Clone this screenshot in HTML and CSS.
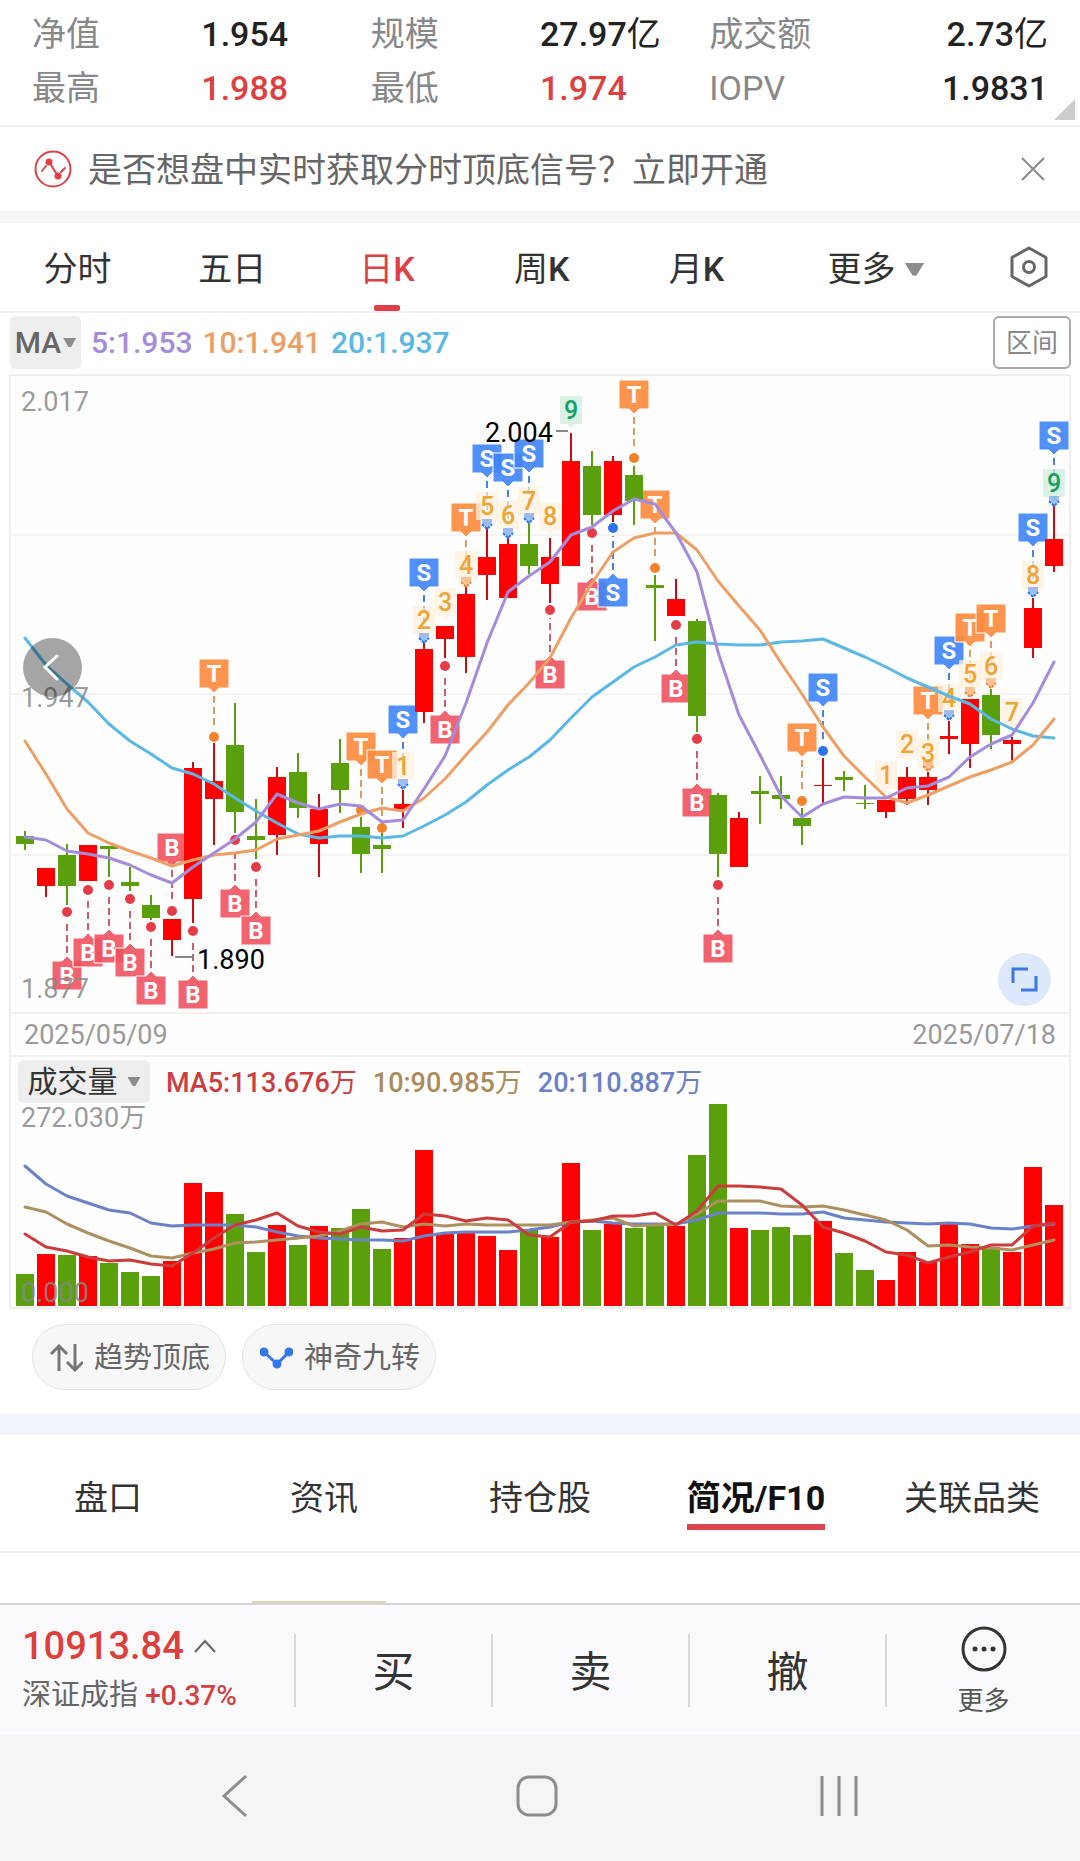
FILE: index.html
```html
<!DOCTYPE html>
<html lang="zh-CN">
<head>
<meta charset="utf-8">
<meta name="viewport" content="width=device-width, initial-scale=1">
<title>日K 行情</title>
<link rel="stylesheet" href="styles.css">
</head>
<body>
<main>
  <section class="quote">
    <dl class="quote-grid">
      <dt>净值</dt><dd>1.954</dd>
      <dt>规模</dt><dd>27.97<span class="unit">亿</span></dd>
      <dt>成交额</dt><dd class="end">2.73<span class="unit">亿</span></dd>
      <dt>最高</dt><dd class="up">1.988</dd>
      <dt>最低</dt><dd class="up">1.974</dd>
      <dt>IOPV</dt><dd class="end">1.9831</dd>
    </dl>
    <span class="corner"></span>
  </section>

  <section class="notice">
    <svg class="notice-icon" viewBox="0 0 38 38" fill="none" stroke="#d9434c" stroke-width="2">
      <circle cx="19" cy="19" r="17.500"/>
      <path d="M8 21l4-5M17 15l5 8M27 22l4-4" stroke-linecap="round"/>
      <circle cx="15" cy="12" r="3.500" fill="#e63c48" stroke="none"/><circle cx="24" cy="26" r="3.500" fill="#e63c48" stroke="none"/>
    </svg>
    <a href="#open" class="notice-text">是否想盘中实时获取分时顶底信号？立即开通</a>
    <button aria-label="关闭">
      <svg class="close-icon" viewBox="0 0 24 24" stroke="#8a8a8a" stroke-width="2"><path d="M1 1l22 22M23 1L1 23"/></svg>
    </button>
  </section>

  <nav class="periods">
    <button class="period">分时</button>
    <button class="period">五日</button>
    <button class="period active">日<b>K</b></button>
    <button class="period">周<b>K</b></button>
    <button class="period">月<b>K</b></button>
    <button class="period">更多<span class="caret"></span></button>
    <button aria-label="设置">
      <svg class="settings-icon" viewBox="0 0 40 42" fill="none" stroke="#666" stroke-width="3" stroke-linejoin="round">
        <path d="M20 2l17 9.500v19L20 40 3 30.500v-19z"/><circle cx="20" cy="21" r="5.500"/>
      </svg>
    </button>
  </nav>

  <section class="averages">
    <button class="chip">MA<span class="caret small"></span></button>
    <span class="ma5">5:1.953</span>
    <span class="ma10">10:1.941</span>
    <span class="ma20">20:1.937</span>
    <button class="range">区间</button>
  </section>

  <section class="panel">
    <div class="price">
      <svg id="price-chart" class="chart" viewBox="11 376 1058 636" role="img" aria-label="日K线图"></svg>
      <button class="round back" aria-label="向前">
        <svg viewBox="0 0 59 59" fill="none" stroke="#fff" stroke-width="3" stroke-linecap="round"><path d="M34 18L22 29l12 12"/></svg>
      </button>
      <button class="round expand" aria-label="全屏">
        <svg viewBox="0 0 53 53" fill="none" stroke="#3b78e0" stroke-width="3"><path d="M15 30V16h15M23 37h15V23"/></svg>
      </button>
    </div>
    <div class="dates"><time>2025/05/09</time><time>2025/07/18</time></div>
    <div class="volume-head">
      <button class="chip dark">成交量<span class="caret small"></span></button>
      <span class="vol5">MA5:113.676<span class="unit">万</span></span>
      <span class="vol10">10:90.985<span class="unit">万</span></span>
      <span class="vol20">20:110.887<span class="unit">万</span></span>
    </div>
    <svg id="volume-chart" class="chart" viewBox="11 1103 1058 204" role="img" aria-label="成交量图"></svg>
  </section>

  <section class="signals">
    <button class="pill">
      <svg viewBox="0 0 33 28" fill="none" stroke="#777" stroke-width="3"><path d="M9 27V3M1 10l8-8 8 8M25 0v25M17 18l8 8 8-8"/></svg>
      趋势顶底
    </button>
    <button class="pill">
      <svg viewBox="0 0 33 28" fill="#3478e8" stroke="#3478e8" stroke-width="3"><path d="M4 8l13 12L29 8" fill="none"/><circle cx="4" cy="8" r="3"/><circle cx="17" cy="20" r="3"/><circle cx="29" cy="8" r="3"/></svg>
      神奇九转
    </button>
  </section>

  <nav class="sections">
    <a href="#pankou">盘口</a>
    <a href="#news">资讯</a>
    <a href="#holdings">持仓股</a>
    <a href="#f10" class="active">简况/F10</a>
    <a href="#related">关联品类</a>
  </nav>
  <section class="content"><div class="content-card"></div></section>
</main>

<footer>
  <div class="trade">
    <button class="index">
      <span class="index-value">10913.84
        <svg class="up-icon" viewBox="0 0 22 14" fill="none" stroke="#666" stroke-width="2"><path d="M1 13L11 2l10 11"/></svg>
      </span>
      <span class="index-name">深证成指 <b>+0.37%</b></span>
    </button>
    <button class="action">买</button>
    <button class="action">卖</button>
    <button class="action">撤</button>
    <button class="action more-action">
      <svg viewBox="0 0 46 46" fill="none" stroke="#333" stroke-width="3"><circle cx="23" cy="23" r="21"/><g fill="#333" stroke="none"><circle cx="14" cy="23" r="2.500"/><circle cx="23" cy="23" r="2.500"/><circle cx="32" cy="23" r="2.500"/></g></svg>
      更多
    </button>
  </div>
  <nav class="system">
    <button aria-label="返回"><svg viewBox="0 0 44 44" fill="none" stroke="#8c8c8c" stroke-width="3"><path d="M33 2L11 22l22 20"/></svg></button>
    <button aria-label="主页"><svg viewBox="0 0 44 44" fill="none" stroke="#8c8c8c" stroke-width="3"><rect x="3" y="3" width="38" height="38" rx="11"/></svg></button>
    <button aria-label="最近任务"><svg viewBox="0 0 44 44" fill="none" stroke="#8c8c8c" stroke-width="3"><path d="M5 2v40M22 2v40M39 2v40"/></svg></button>
  </nav>
</footer>
<script src="chart.js"></script>
</body>
</html>
```
FILE: styles.css
```css
* { box-sizing: border-box; }
body {
  margin: 0;
  background: #fff;
  color: #333;
  font: 34px/52px Roboto, "Noto Sans CJK SC", sans-serif;
}
button {
  margin: 0;
  padding: 0;
  border: 0;
  background: none;
  color: inherit;
  font: inherit;
}
a { color: inherit; text-decoration: none; }
b { font-weight: 500; }
svg { display: block; }
.unit { font-weight: 400; }

.quote { position: relative; padding: 8px 32px 11px; border-bottom: 2px solid #f0f0f0; }
.quote-grid { display: grid; grid-template-columns: repeat(6, 1fr); row-gap: 2px; margin: 0; }
.quote dt { color: #888; }
.quote dd { margin: 0; color: #222; font-weight: 500; white-space: nowrap; }
.quote .up { color: #dd4040; }
.quote .end { text-align: right; }
.corner {
  position: absolute;
  right: 5px;
  bottom: 5px;
  width: 21px;
  height: 21px;
  background: #ccc;
  clip-path: polygon(100% 0, 100% 100%, 0 100%);
}

.notice { display: flex; align-items: center; height: 84px; padding: 0 35px 0 34px; color: #666; }
.notice-icon { width: 38px; margin-right: 16px; }
.notice-text { flex: 1; padding-top: 2px; }
.close-icon { width: 24px; }

.periods {
  display: grid;
  grid-template-columns: repeat(5, 1fr) 204px 102px;
  height: 102px;
  border-top: 12px solid #f6f6f6;
  border-bottom: 2px solid #f0f0f0;
  align-items: stretch;
}
.periods button { display: flex; align-items: center; justify-content: center; }
.periods .period { padding-top: 4px; }
.periods .active { position: relative; color: #dd4048; }
.periods .active::after {
  content: "";
  position: absolute;
  bottom: 0;
  width: 26px;
  height: 6px;
  border-radius: 2px;
  background: #dd4048;
}
.settings-icon { width: 40px; }
.caret {
  display: inline-block;
  width: 20px;
  height: 13px;
  margin-left: 9px;
  background: #8c8c8c;
  clip-path: polygon(0 0, 100% 0, 60% 100%, 40% 100%);
}
.caret.small { width: 13px; height: 9px; margin-left: 2px; }

.averages { display: flex; align-items: center; gap: 10px; height: 61px; padding: 0 9px 2px 10px; font-size: 30px; font-weight: 500; }
.chip { display: flex; align-items: center; justify-content: center; border-radius: 5px; background: #eee; }
.averages .chip { width: 71px; height: 53px; color: #666; }
.ma5 { color: #a58bdb; }
.ma10 { color: #eb9f62; }
.ma20 { color: #5ab6e4; }
.range {
  width: 78px;
  height: 53px;
  margin-left: auto;
  border: 2px solid #aaa;
  border-radius: 6px;
  color: #888;
  font-size: 26px;
  font-weight: 400;
  line-height: 40px;
}

.panel { margin: 0 9px; border: 2px solid #eee; background: #fefefe; }
.price { position: relative; }
.chart { width: 100%; height: auto; overflow: visible; }
.round { position: absolute; border-radius: 50%; }
.back { top: 262px; left: 12px; width: 59px; background: rgba(0, 0, 0, .35); }
.expand { right: 18px; bottom: 6px; width: 53px; background: #dde8fc; }
.dates {
  display: flex;
  justify-content: space-between;
  padding: 2px 13px 0;
  border: solid #f0f0f0;
  border-width: 2px 0;
  color: #999;
  font-size: 27px;
  line-height: 39px;
}
.volume-head { display: flex; align-items: center; gap: 16px; padding: 3px 7px 0; font-size: 27px; font-weight: 500; line-height: 43px; }
.volume-head > span { padding-top: 3px; line-height: 40px; }
.volume-head .chip { width: 132px; font-size: 30px; font-weight: 400; }
.dark .caret { margin-left: 10px; }
.vol5 { color: #cc3d41; }
.vol10 { color: #aa8c5c; }
.vol20 { color: #6a81c6; }

.axis { fill: #888; fill-opacity: .85; font-size: 27px; }
.extreme { fill: #000; font-size: 27px; }
.badge-letter { fill: #fff; font-size: 24px; font-weight: 700; text-anchor: middle; }
.count { font-size: 25px; font-weight: 500; text-anchor: middle; }

.signals { display: flex; gap: 16px; padding: 15px 32px 24px; }
.pill {
  display: flex;
  align-items: center;
  justify-content: center;
  gap: 11px;
  width: 194px;
  height: 66px;
  padding: 2px 0 0 2px;
  border: 1px solid #e4e4e4;
  border-radius: 33px;
  background: #f7f7f7;
  color: #666;
  font-size: 29px;
}
.pill svg { width: 33px; }

.sections {
  display: grid;
  grid-template-columns: repeat(5, 1fr);
  height: 139px;
  padding-top: 25px;
  border-top: 21px solid #f3f4f9;
  border-bottom: 2px solid #f0f0f0;
  justify-items: center;
  align-items: start;
}
.sections a { height: 70px; border-bottom: 6px solid transparent; line-height: 76px; }
.sections .active { border-color: #dd4450; color: #111; font-weight: 700; }
.content { display: flex; align-items: flex-end; height: 50px; padding-left: 252px; }
.content-card { width: 134px; height: 2px; background: #e2cfb4; }

.trade {
  display: grid;
  grid-template-columns: 294fr 197fr 197fr 197fr 195fr;
  align-items: center;
  height: 132px;
  border-top: 2px solid #d4d4d8;
  background: #fafafc;
}
.index { padding-left: 22px; text-align: left; }
.index-value { display: flex; align-items: center; gap: 10px; color: #dd403c; font-size: 38px; font-weight: 500; line-height: 50px; }
.up-icon { width: 22px; }
.index-name { display: block; color: #666; font-size: 29px; line-height: 48px; }
.index-name b { color: #cf403e; font-size: 28px; }
.action { height: 73px; padding-top: 2px; border-left: 2px solid #d8d8dc; font-size: 42px; line-height: 73px; }
.more-action { display: flex; flex-direction: column; align-items: center; justify-content: center; padding-top: 6px; color: #555; font-size: 26px; line-height: 40px; gap: 9px; }
.more-action svg { width: 46px; flex: none; }
.system {
  display: grid;
  grid-template-columns: repeat(3, 1fr);
  height: 126px;
  padding: 0 90px 4px 84px;
  background: #f5f5f5;
}
.system button { display: flex; align-items: center; justify-content: center; }
.system svg { width: 44px; }
```
FILE: chart.js
```js
const NS = "http://www.w3.org/2000/svg";
const STEP = 21, X0 = 25;
const RED = "#ff0000", GREEN = "#5aa00c";
const x = i => X0 + i * STEP;

function add(parent, tag, attrs, text) {
  const el = document.createElementNS(NS, tag);
  for (const key in attrs) el.setAttribute(key, attrs[key]);
  if (text !== undefined) el.textContent = text;
  parent.appendChild(el);
  return el;
}
function line(parent, values, color) {
  add(parent, "polyline", {
    points: values.map((v, i) => x(i) + "," + v).join(" "),
    fill: "none", stroke: color, "stroke-width": 3, "stroke-linejoin": "round", "stroke-linecap": "round"
  });
}

// direction, high, body top, body bottom, low
const candles = [
  ["G",831,836,844,850],["R",868,868,886,897],["G",844,855,886,905],["R",845,845,881,881],["G",846,846,849,877],
  ["G",867,882,886,891],["G",895,905,918,920],["R",919,919,940,956],["R",762,768,899,923],["R",743,781,799,845],
  ["G",703,745,812,833],["G",799,836,840,859],["R",767,777,835,855],["G",753,772,808,818],["R",794,809,844,877],
  ["G",739,763,790,813],["G",817,827,854,873],["G",833,845,849,873],["R",790,804,809,828],["R",643,649,712,723],
  ["R",626,626,639,658],["R",587,594,657,673],["R",528,557,575,600],["R",538,544,598,598],["G",523,544,566,574],
  ["R",538,557,584,603],["R",433,461,566,566],["G",451,466,515,525],["R",456,461,515,522],["G",466,475,501,525],
  ["G",575,585,588,641],["R",579,599,616,616],["G",619,621,716,732],["G",793,795,854,877],["R",812,818,867,867],
  ["G",776,791,794,824],["G",776,795,799,809],["G",808,818,826,845],["R",758,785,786,803],["G",771,777,780,791],
  ["G",785,803,804,809],["R",800,800,812,818],["R",767,777,799,805],["R",772,777,790,805],["R",721,736,739,754],
  ["R",699,699,744,768],["G",689,695,735,749],["R",737,740,744,762],["R",598,608,648,658],["R",506,539,566,572]
];
const priceLines = {
  "#5bb8e4": [638,665,684,702,724,741,754,768,774,784,798,811,823,834,838,836,836,838,836,826,815,802,785,770,757,740,718,697,682,667,657,645,642,644,645,645,642,641,639,648,657,667,678,687,696,704,719,729,736,738],
  "#eda066": [741,774,809,833,843,851,858,866,860,855,853,850,839,835,831,822,814,808,811,798,779,755,732,705,683,658,618,583,552,538,533,533,550,581,606,630,663,694,727,756,777,797,803,795,786,777,770,762,745,719],
  "#a38cdc": [837,840,851,854,858,865,875,883,867,853,839,822,794,803,809,804,806,822,820,789,756,703,643,592,576,562,535,527,511,499,504,533,572,652,715,755,796,817,804,797,798,798,788,786,777,757,744,735,703,662]
};
// index, letter, badge top, dot centre
const badges = [
  [2,"B",961,912],[3,"B",938,890],[4,"B",934,885],[5,"B",948,899],[6,"B",976,927],[7,"B",833,911],[8,"B",980,931],
  [9,"T",659,737],[10,"B",889,840],[11,"B",916,867],[16,"T",732,810],[17,"T",750,828],[18,"S",705,783],
  [19,"S",558,637],[20,"B",715,666],[21,"T",503,581],[22,"S",444,523],[23,"S",453,532],[24,"S",439,517],
  [25,"B",660,610],[27,"B",582,533],[28,"S",578,528],[29,"T",380,458],[30,"T",490,568],[31,"B",674,625],
  [32,"B",788,739],[33,"B",934,885],[37,"T",723,801],[38,"S",673,751],[43,"T",686,765],[44,"S",636,714],
  [45,"T",613,691],[46,"T",604,682],[48,"S",513,591],[49,"S",421,500]
];
// index, count, box top
const counts = [
  [18,1,752],[19,2,606],[20,3,588],[21,4,551],[22,5,492],[23,6,501],[24,7,487],[25,8,502],[26,9,396],
  [41,1,761],[42,2,730],[43,3,739],[44,4,684],[45,5,660],[46,6,652],[47,7,698],[48,8,561],[49,9,469]
];
const badgeColors = {
  B: ["#ef525f", "#e63c48", "#c8606c"],
  T: ["#fd8a3c", "#f5822a", "#dc9a5c"],
  S: ["#3f84f8", "#2b73ea", "#4a84d2"]
};
const hasCount = i => counts.some(c => c[0] === i);

const price = document.getElementById("price-chart");
[535, 694, 855].forEach(y => add(price, "path", { d: `M11 ${y}H1069`, stroke: "#f4f4f4", "stroke-width": 2 }));

badges.forEach(([i, letter, top, dot]) => {
  const cx = x(i), above = top < dot, [fill, , dash] = badgeColors[letter];
  const from = above ? top + 37 : top - 8, to = above ? dot - 8 : dot + 8;
  add(price, "path", { d: `M${cx} ${from}V${to}`, stroke: dash, "stroke-width": 2, "stroke-dasharray": "7 4" });
  const outline = above
    ? `M${cx-15} ${top}h30v29h-10l-5 5l-5 -5h-10z`
    : `M${cx-15} ${top}h10l5 -5l5 5h10v29h-30z`;
  add(price, "path", { d: outline, fill, "fill-opacity": .9, stroke: "#fff", "stroke-width": 1 });
  add(price, "text", { class: "badge-letter", x: cx, y: top + 23 }, letter);
});
counts.forEach(([i, n, top]) => {
  const cx = x(i), nine = n === 9;
  add(price, "path", {
    d: `M${cx-11} ${top}h22v28h-7l-4 4l-4 -4h-7z`,
    fill: nine ? "#cdeedd" : "#fff0dc", "fill-opacity": .75
  });
  add(price, "text", { class: "count", x: cx, y: top + 23, fill: nine ? "#17a05f" : "#eda436" }, n);
});
candles.forEach(([dir, high, top, bottom, low], i) => {
  const cx = x(i), up = dir === "R";
  add(price, "path", { d: `M${cx} ${high}V${low}`, stroke: up ? "#c80c14" : GREEN, "stroke-width": 2 });
  add(price, "rect", { x: cx - 9, y: top, width: 18, height: bottom - top, fill: up ? RED : GREEN });
});
// a plain dot, or a pale pointer with a chevron where a count box sits on the dot
badges.forEach(([i, letter, , dot]) => {
  const cx = x(i), color = badgeColors[letter][1];
  if (!hasCount(i) || i === 20 || i === 25) {
    add(price, "circle", { cx, cy: dot, r: 5, fill: color });
    return;
  }
  add(price, "path", { d: `M${cx-5} ${dot-4}h10v4l-5 5l-5 -5z`, fill: color, "fill-opacity": .45 });
  add(price, "path", { d: `M${cx-5} ${dot+1}l5 5l5 -5`, fill: "none", stroke: color, "stroke-width": 2, "stroke-dasharray": "3 1" });
});
for (const color in priceLines) line(price, priceLines[color], color);
[["2.017", 411], ["1.947", 707], ["1.877", 998]].forEach(([t, y]) => add(price, "text", { class: "axis", x: 21, y }, t));
add(price, "path", { d: "M556 431H568M175 957H193", stroke: "#888", "stroke-width": 2 });
add(price, "text", { class: "extreme", x: 485, y: 442 }, "2.004");
add(price, "text", { class: "extreme", x: 197, y: 969 }, "1.890");

const volumeTops = [1274,1254,1255,1256,1263,1272,1276,1261,1183,1192,1214,1252,1225,1245,1226,1228,1209,1249,1238,1150,1234,1233,1236,1250,1229,1237,1163,1230,1224,1228,1226,1226,1155,1104,1228,1230,1227,1235,1221,1253,1270,1280,1252,1262,1224,1244,1247,1252,1167,1205];
const volumeLines = {
  "#6a82c8": [1166,1184,1196,1203,1210,1213,1223,1226,1225,1225,1225,1227,1232,1236,1238,1239,1240,1240,1241,1236,1233,1232,1232,1232,1230,1227,1222,1221,1223,1224,1224,1224,1220,1213,1213,1213,1214,1214,1212,1218,1220,1222,1223,1224,1223,1224,1228,1229,1226,1224],
  "#ae9060": [1207,1212,1224,1233,1241,1248,1256,1258,1253,1249,1243,1242,1240,1238,1236,1231,1224,1222,1227,1224,1226,1224,1225,1225,1225,1225,1222,1220,1218,1226,1225,1224,1214,1201,1201,1201,1206,1207,1206,1210,1215,1220,1230,1246,1245,1247,1248,1250,1245,1240],
  "#cb3c3c": [1234,1247,1251,1257,1261,1260,1264,1266,1253,1238,1225,1220,1213,1226,1232,1234,1227,1231,1230,1214,1216,1221,1218,1220,1235,1237,1222,1221,1216,1216,1213,1225,1211,1186,1186,1187,1189,1205,1227,1233,1241,1252,1255,1263,1257,1252,1245,1245,1226,1223]
};
const volume = document.getElementById("volume-chart");
volumeTops.forEach((top, i) => add(volume, "rect", {
  x: x(i) - 9, y: top, width: 18, height: 1306 - top, fill: candles[i][0] === "R" ? RED : GREEN
}));
for (const color in volumeLines) line(volume, volumeLines[color], color);
add(volume, "text", { class: "axis", x: 21, y: 1127 }, "272.030万");
add(volume, "text", { class: "axis", x: 21, y: 1302 }, "0.000");
```
